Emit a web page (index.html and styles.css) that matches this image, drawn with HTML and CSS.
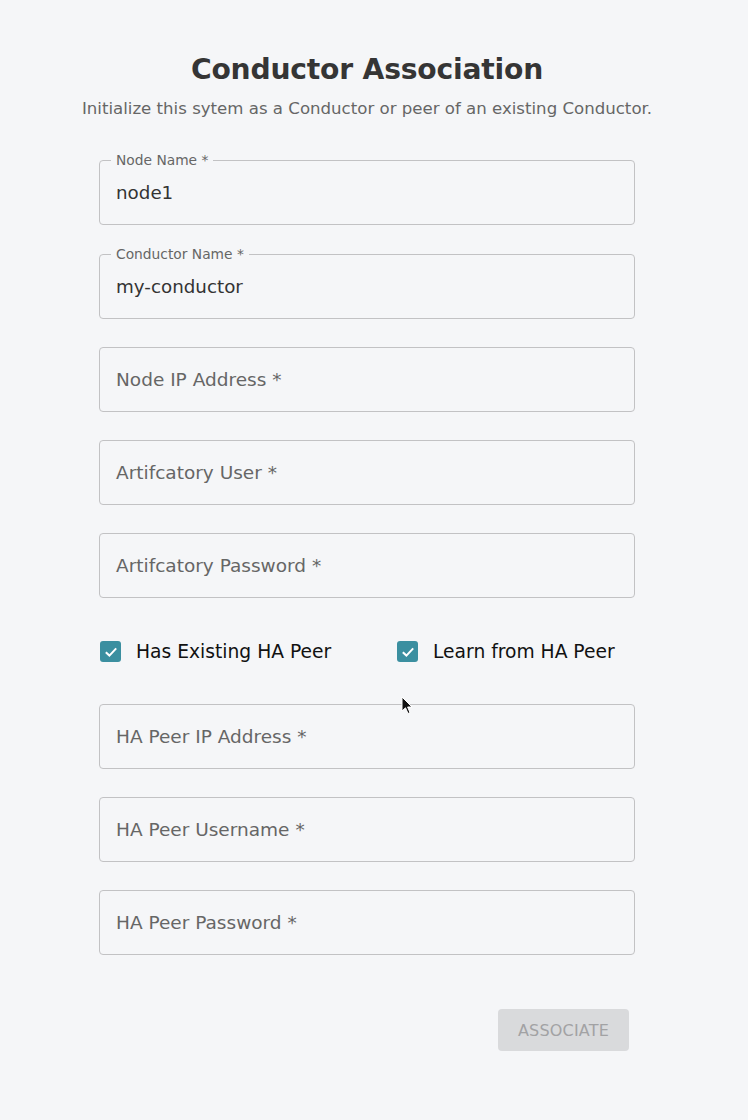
FILE: index.html
```html
<!DOCTYPE html>
<html>
<head>
<meta charset="utf-8">
<link rel="stylesheet" href="styles.css">
</head>
<body>
<div class="page">
  <h1 class="title">Conductor Association</h1>
  <p class="subtitle">Initialize this sytem as a Conductor or peer of an existing Conductor.</p>
  <form class="form">
    <div class="field filled"><span class="label">Node Name *</span><span class="value">node1</span></div>
    <div class="field filled second"><span class="label">Conductor Name *</span><span class="value">my-conductor</span></div>
    <div class="field"><span class="placeholder">Node IP Address *</span></div>
    <div class="field"><span class="placeholder">Artifcatory User *</span></div>
    <div class="field"><span class="placeholder">Artifcatory Password *</span></div>
    <div class="checks">
      <label class="check"><span class="box"><svg width="16" height="16" viewBox="0 0 16 16"><path d="M2.8 8.2 L6.4 11.6 L13.2 4.4" fill="none" stroke="#fff" stroke-width="2"/></svg></span>Has Existing HA Peer</label>
      <label class="check"><span class="box"><svg width="16" height="16" viewBox="0 0 16 16"><path d="M2.8 8.2 L6.4 11.6 L13.2 4.4" fill="none" stroke="#fff" stroke-width="2"/></svg></span>Learn from HA Peer</label>
    </div>
    <div class="field"><span class="placeholder">HA Peer IP Address *</span></div>
    <div class="field"><span class="placeholder">HA Peer Username *</span></div>
    <div class="field"><span class="placeholder">HA Peer Password *</span></div>
    <div class="actions"><button type="button" class="btn">ASSOCIATE</button></div>
  </form>
  <svg class="cursor" width="14" height="20" viewBox="0 0 14 20"><path d="M1 1 L1 15 L4.5 11.8 L7 17.5 L9 16.6 L6.6 11 L11 11 Z" fill="#111" stroke="#fff" stroke-width="1"/></svg>
</div>
</body>
</html>
```
FILE: styles.css
```css
* { box-sizing: border-box; }
html, body { margin: 0; padding: 0; background: #f5f6f8; }
body { font-family: "DejaVu Sans", "Noto Sans", sans-serif; color: #333; }
.page { width: 734px; padding-top: 50px; position: relative; height: 1120px; }
.title { margin: 0; text-align: center; font-size: 28.2px; font-weight: 700; color: #353535; line-height: 40px; letter-spacing: -0.2px; }
.subtitle { margin: 0; margin-top: 9px; text-align: center; font-size: 16.6px; color: #666; line-height: 20px; }
.form { width: 536px; margin: 41px auto 0; display: flex; flex-direction: column; gap: 28px; }
.field { position: relative; height: 65px; border: 1px solid #c2c2c4; border-radius: 4px; display: flex; align-items: center; padding: 0 16px; }
.field.second { margin-top: 1px; }
.label { position: absolute; left: 11px; top: -9px; padding: 0 5px; background: #f5f6f8; font-size: 13.8px; line-height: 16px; color: #666; }
.value { font-size: 18.3px; color: #333; }
.placeholder { font-size: 18.5px; color: #666; }
.checks { display: flex; height: 49px; margin-top: 1px; align-items: center; }
.check { display: flex; align-items: center; font-size: 18.7px; color: #111; flex: 0 0 297px; }
.box { width: 21px; height: 21px; border-radius: 3px; background: #3b8fa0; display: flex; align-items: center; justify-content: center; margin: 0 15px 0 1px; }
.actions { display: flex; justify-content: flex-end; padding-right: 6px; margin-top: 26px; }
.btn { width: 131px; height: 42px; border: none; border-radius: 4px; background: #d9dadc; color: #a2a2a4; font-family: inherit; font-size: 16px; letter-spacing: 0.2px; }
.cursor { position: absolute; left: 401px; top: 696px; }
```
